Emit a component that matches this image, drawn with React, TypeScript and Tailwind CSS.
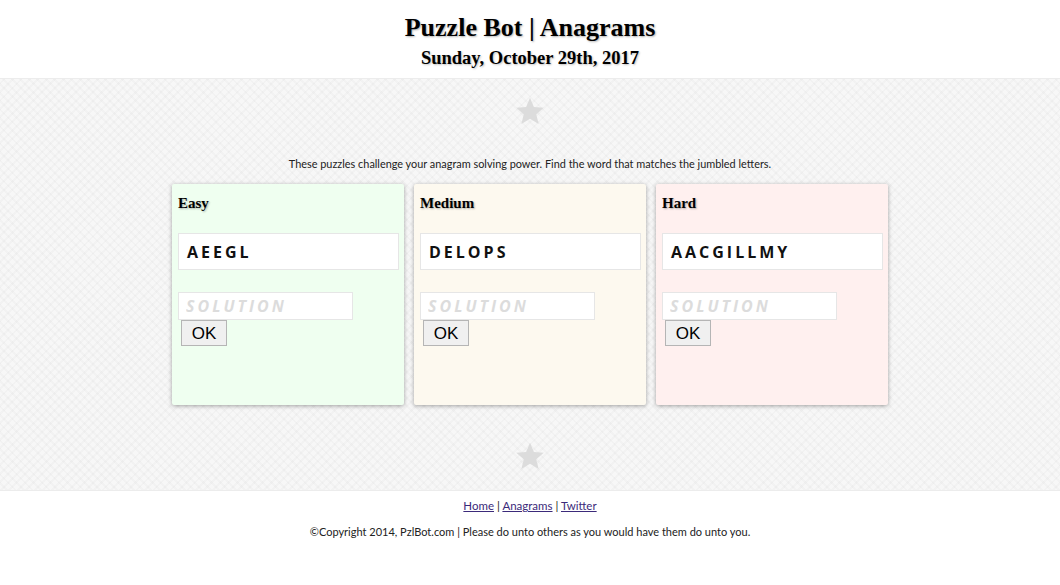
const PUZZLES = [
  { level: 'Easy', letters: 'AEEGL', bg: 'bg-[#effff0]' },
  { level: 'Medium', letters: 'DELOPS', bg: 'bg-[#fdf9ef]' },
  { level: 'Hard', letters: 'AACGILLMY', bg: 'bg-[#fff0ef]' },
];

const serif = 'font-["Palatino_Linotype","Liberation_Serif",serif]';
const sans = 'font-["Open_Sans","Liberation_Sans",sans-serif]';
const body = 'font-["Lato","Liberation_Sans",sans-serif]';

function Star() {
  return (
    <div className="flex justify-center">
      <svg width="30" height="29" viewBox="0 0 24 23" aria-hidden="true">
        <path
          d="M12 0.5l3.1 7.4 7.9 0.6-6 5.2 1.9 7.8L12 17.3l-6.9 4.2 1.9-7.8-6-5.2 7.9-0.6z"
          fill="#dcdcdc"
        />
      </svg>
    </div>
  );
}

function Card({ level, letters, bg }: { level: string; letters: string; bg: string }) {
  return (
    <div className={`flex h-[221px] w-[232px] flex-col rounded-[2px] px-[6px] pt-[9px] shadow-[0_1px_4px_rgba(0,0,0,0.35)] ${bg}`}>
      <h2 className={`${serif} text-[15px] font-bold leading-[20px] text-black [text-shadow:1px_1px_2px_rgba(0,0,0,0.3)]`}>
        {level}
      </h2>
      <div className={`mt-[20px] flex h-[37px] w-[221px] items-center border border-[#e6e6e6] bg-white pl-[8px] ${sans} text-[16px] font-bold tracking-[3px] text-[#111]`}>
        {letters}
      </div>
      <input
        placeholder="SOLUTION"
        className={`mt-[22px] h-[28px] w-[175px] border border-[#e6e6e6] bg-white px-[7px] ${sans} text-[16px] font-bold italic tracking-[3px] text-[#333] outline-none placeholder:text-[#dcdcdc]`}
      />
      <div className="pl-[3px]">
        <button className="h-[26px] w-[46px] border border-[#b5b5b5] bg-[#f0f0f0] font-['Liberation_Sans',sans-serif] text-[17px] leading-none text-black">
          OK
        </button>
      </div>
    </div>
  );
}

export default function App() {
  return (
    <div className="min-h-[585px] w-full bg-white">
      <header className={`flex h-[79px] flex-col items-center border-b border-[#ececec] bg-white pt-[12px] ${serif} text-black`}>
        <h1 className="text-[26px] font-bold leading-[32px] [text-shadow:1px_1px_2px_rgba(0,0,0,0.3)]">
          Puzzle Bot | Anagrams
        </h1>
        <p className="mt-[2px] text-[18.5px] font-bold leading-[24px] [text-shadow:1px_1px_2px_rgba(0,0,0,0.25)]">
          Sunday, October 29th, 2017
        </p>
      </header>

      <main className="flex h-[411px] flex-col bg-[#f7f7f7] bg-[repeating-linear-gradient(45deg,transparent_0,transparent_4px,rgba(0,0,0,0.018)_4px,rgba(0,0,0,0.018)_6px),repeating-linear-gradient(-45deg,transparent_0,transparent_4px,rgba(0,0,0,0.018)_4px,rgba(0,0,0,0.018)_6px)] pt-[18px]">
        <Star />
        <p className={`mt-[31px] text-center ${body} text-[10.9px] leading-[14px] text-[#222]`}>
          These puzzles challenge your anagram solving power. Find the word that matches the jumbled letters.
        </p>
        <div className="mt-[13px] flex justify-center gap-[10px]">
          {PUZZLES.map((p) => (
            <Card key={p.level} {...p} />
          ))}
        </div>
        <div className="mt-[37px]">
          <Star />
        </div>
      </main>

      <footer className={`flex flex-col items-center border-t border-[#ececec] bg-white pt-[7px] ${body} text-[#222]`}>
        <nav className="text-[11.5px] leading-[16px]">
          <a href="#" className="text-[#3b2a7a] underline">Home</a>
          {' | '}
          <a href="#" className="text-[#3b2a7a] underline">Anagrams</a>
          {' | '}
          <a href="#" className="text-[#3b2a7a] underline">Twitter</a>
        </nav>
        <p className="mt-[10px] text-[11px] leading-[16px]">
          ©Copyright 2014, PzlBot.com | Please do unto others as you would have them do unto you.
        </p>
      </footer>
    </div>
  );
}
